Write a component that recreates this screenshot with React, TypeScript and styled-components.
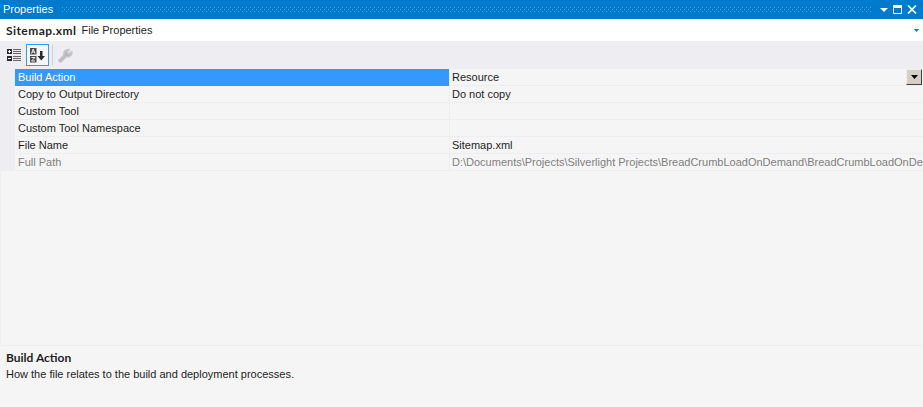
import React from "react";
import styled, { createGlobalStyle } from "styled-components";

const Global = createGlobalStyle`
  html, body { margin: 0; padding: 0; background: #f5f5f5; }
  #root { width: 923px; height: 407px; overflow: hidden; }
`;
const Window = styled.div`
  width: 923px; height: 407px; display: flex; flex-direction: column; overflow: hidden;
  font-family: "Liberation Sans", Arial, sans-serif; font-size: 11px; color: #1e1e1e; background: #f5f5f5;
`;
const Bold = styled.b`
  font-family: "Lato", "Liberation Sans", sans-serif; font-size: 12px; font-weight: 700;
`;
const TitleBar = styled.div`
  height: 19px; flex: none; background: #007acc; color: #fff; display: flex; align-items: center; padding-left: 3px;
`;
const TitleText = styled.span`line-height: 19px; margin-right: 9px;`;
const Grip = styled.div`
  flex: 1; height: 5px; margin-right: 8px;
  background: repeating-linear-gradient(90deg, #4aa0db 0 1px, transparent 1px 4px) 0 0 / 100% 1px no-repeat,
    repeating-linear-gradient(90deg, transparent 0 2px, #4aa0db 2px 3px, transparent 3px 4px) 0 2px / 100% 1px no-repeat,
    repeating-linear-gradient(90deg, #4aa0db 0 1px, transparent 1px 4px) 0 4px / 100% 1px no-repeat;
`;
const TitleButtons = styled.div`display: flex; align-items: center; gap: 5px; padding-right: 6px;`;
const Header = styled.div`
  height: 22px; flex: none; background: #fff; display: flex; align-items: center; padding: 0 6px; position: relative;
`;
const FileName = styled(Bold)`margin-right: 5px; letter-spacing: 0.45px;`;
const HeaderArrow = styled.svg`position: absolute; right: 4px; top: 10px;`;
const Toolbar = styled.div`
  height: 28px; flex: none; background: #eeeef2; display: flex; align-items: center; padding-left: 3px;
`;
const ToolButton = styled.div<{ $on?: boolean }>`
  width: 23px; height: 22px; box-sizing: border-box; display: flex; align-items: center; justify-content: center;
  border: 1px solid ${p => (p.$on ? "#3399ff" : "transparent")};
  background: ${p => (p.$on ? "#f5f5f5" : "transparent")};
`;
const Sep = styled.div`width: 1px; height: 20px; background: #cccedb; margin: 0 5px 0 3px;`;
const Grid = styled.div`flex: none; height: 276px; display: flex; flex-direction: column; border-bottom: 1px solid #eeeef2;`;
const Row = styled.div`
  height: 17px; flex: none; display: grid; grid-template-columns: 15px 434px 1fr; box-sizing: border-box; line-height: 16px;
`;
const Gutter = styled.div`background: #eeeef2;`;
const NameCell = styled.div<{ $sel?: boolean; $muted?: boolean }>`
  padding-left: 3px; white-space: nowrap; box-sizing: border-box;
  border-bottom: 1px solid ${p => (p.$sel ? "#3399ff" : "#eeeef2")};
  background: ${p => (p.$sel ? "#3399ff" : "#f5f5f5")};
  color: ${p => (p.$sel ? "#fff" : p.$muted ? "#808080" : "#1e1e1e")};
`;
const ValueCell = styled.div<{ $muted?: boolean }>`
  padding-left: 2px; white-space: nowrap; overflow: hidden; box-sizing: border-box; position: relative;
  border-left: 1px solid #eeeef2; border-bottom: 1px solid #eeeef2;
  color: ${p => (p.$muted ? "#808080" : "#1e1e1e")};
`;
const DropButton = styled.div`
  position: absolute; right: 1px; top: 0; width: 16px; height: 16px; box-sizing: border-box;
  background: #d4d0c8; border: 1px solid; border-color: #f0efea #404040 #404040 #f0efea;
  display: flex; align-items: center; justify-content: center;
`;
const Empty = styled.div`flex: 1; border-left: 1px solid #eeeef2;`;
const Description = styled.div`flex: 1; padding: 4px 6px 0; line-height: 16px;`;
const DescTitle = styled(Bold)`display: block;`;

const rows = [
  ["Build Action", "Resource"],
  ["Copy to Output Directory", "Do not copy"],
  ["Custom Tool", ""],
  ["Custom Tool Namespace", ""],
  ["File Name", "Sitemap.xml"],
  ["Full Path", "D:\\Documents\\Projects\\Silverlight Projects\\BreadCrumbLoadOnDemand\\BreadCrumbLoadOnDemand\\Sitemap.xml"],
];

export default function App() {
  return (
    <Window>
      <Global />
      <TitleBar>
        <TitleText>Properties</TitleText>
        <Grip />
        <TitleButtons>
          <svg width="8" height="4" viewBox="0 0 8 4"><path d="M0 0h8L4 4z" fill="#fff" /></svg>
          <svg width="9" height="9" viewBox="0 0 9 9"><path d="M.5 2.500h8v6h-8z" fill="none" stroke="#fff" /><path d="M0 0h9v2.500H0z" fill="#fff" /></svg>
          <svg width="10" height="9" viewBox="0 0 10 9"><path d="M1 .5l8 8M9 .5l-8 8" stroke="#fff" strokeWidth="1.7" /></svg>
        </TitleButtons>
      </TitleBar>
      <Header>
        <FileName>Sitemap.xml</FileName>
        <span>File Properties</span>
        <HeaderArrow width="5" height="3" viewBox="0 0 5 3"><path d="M0 0h5L2.500 3z" fill="#007acc" /></HeaderArrow>
      </Header>
      <Toolbar>
        <ToolButton>
          <svg width="15" height="14" viewBox="0 0 15 14">
            <path d="M0 1h5v5H0zM0 8h5v5H0z" fill="#2a2a2a" />
            <path d="M1 3h3v1H1zM2 2h1v3H2zM1 10h3v1H1z" fill="#fff" />
            <path d="M6 1h8v1H6zM6 3h8v1H6zM6 5h8v1H6zM6 8h8v1H6zM6 10h8v1H6zM6 12h8v1H6z" fill="#666" />
          </svg>
        </ToolButton>
        <ToolButton $on>
          <svg width="15" height="15" viewBox="0 0 15 15">
            <path d="M0 0h6.500v6.500H0zM0 8h6.500v6.500H0z" fill="#4a4a4a" />
            <path d="M1.500 5.500L3.200 1 5 5.500M2 4h2.500" stroke="#eee" fill="none" />
            <path d="M1.500 9.500h3.500L1.500 13h3.500" stroke="#eee" fill="none" />
            <path d="M10 3h2.500v5H15l-3.700 4.500L7.500 8H10z" fill="#2a2a2a" />
          </svg>
        </ToolButton>
        <Sep />
        <svg width="15" height="15" viewBox="0 0 15 15">
          <path d="M2 14l-1.500-1.500L6 7c-.8-3.200 1.500-6 5.500-5.500L9 4l2 2 2.800-2.500c.6 3.500-2 6.200-5.500 5.200L3 14z" fill="#b8b8ba" stroke="#c8c8ca" strokeWidth="1.6" strokeLinejoin="round" />
        </svg>
      </Toolbar>
      <Grid>
        {rows.map(([name, value], i) => (
          <Row key={name}>
            <Gutter />
            <NameCell $sel={i === 0} $muted={i === 5}>{name}</NameCell>
            <ValueCell $muted={i === 5}>
              {value}
              {i === 0 && (
                <DropButton>
                  <svg width="7" height="4" viewBox="0 0 7 4"><path d="M0 0h7L3.500 4z" fill="#000" /></svg>
                </DropButton>
              )}
            </ValueCell>
          </Row>
        ))}
        <Empty />
      </Grid>
      <Description>
        <DescTitle>Build Action</DescTitle>
        <div>How the file relates to the build and deployment processes.</div>
      </Description>
    </Window>
  );
}
